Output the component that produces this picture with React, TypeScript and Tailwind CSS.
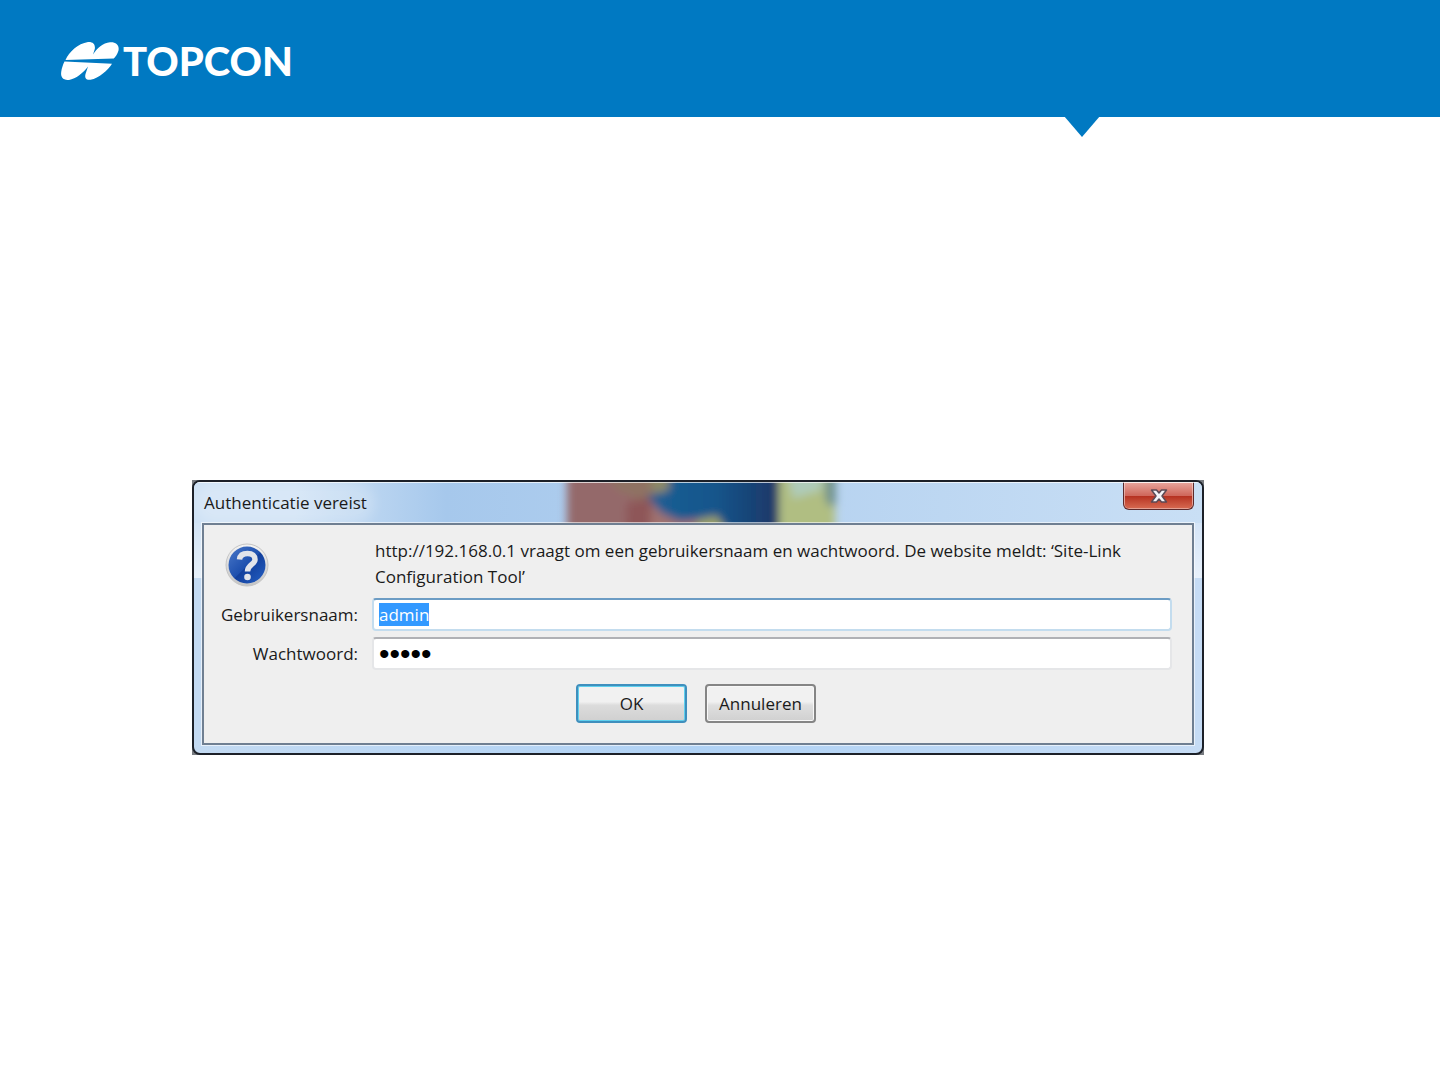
import { useEffect, useRef, useState } from 'react'

function Logo() {
  return (
    <a href="#" aria-label="Topcon" className="flex items-center gap-1 text-white">
      <svg width="59" height="40" viewBox="0 0 59 40" fill="currentColor" aria-hidden="true">
        <path d="M5.500 19C9 11 18 2.500 28 1C33 .6 35.500 3.500 34.800 8L33 13.500C37 7 43 1.800 50 1.200C56 .8 59.500 4 58.500 9.500C57.500 13 55.500 15.800 53.800 17.500Z" />
        <path d="M4.500 20.500L52 22.800C48 29 39 37.500 30.500 38.800C26 39.300 24.500 37 25.500 33L28 25.500C23 32 16 38 9 38.900C3 39.500 .5 36 1.200 31C1.800 27 3 23.500 4.500 20.500Z" />
      </svg>
      <span className="font-['Lato',sans-serif] text-[40px] leading-10 font-black">TOPCON</span>
    </a>
  )
}

// Window content that shines through the glass title bar
function GlassBackdrop() {
  return (
    <svg className="absolute top-0 left-[37%] h-full w-[274px] overflow-visible" viewBox="0 0 274 40" preserveAspectRatio="none" aria-hidden="true">
      <defs>
        <filter id="soft" x="-10%" y="-50%" width="120%" height="200%">
          <feGaussianBlur stdDeviation="4" />
        </filter>
        <linearGradient id="sea" x1="0" x2="1">
          <stop offset="0" stopColor="#1b5f94" />
          <stop offset="0.5" stopColor="#17568c" />
          <stop offset="1" stopColor="#1b3565" />
        </linearGradient>
      </defs>
      <g filter="url(#soft)">
        <path d="M0 -20H200V60H0Z" fill="#94696a" />
        <path d="M28 -20H105V12L75 18L50 8Z" fill="#8f7263" />
        <path d="M60 20L86 14L100 60H58Z" fill="#8e5658" />
        <path d="M82 60L85 20L112 34L150 36V60Z" fill="#a07270" />
        <path d="M84 -20H104V10L92 13L84 6Z" fill="#8c8a68" />
        <path d="M102 -20H214V60H165L150 35L112 38L94 30L80 14L102 8Z" fill="url(#sea)" />
        <path d="M132 36L150 33L168 60H122Z" fill="#9da267" />
        <path d="M212 -20H268V60H212Z" fill="#b0be82" />
        <path d="M218 -20H258L254 8L226 16Z" fill="#afccb9" />
        <path d="M258 -20H269V22L262 24L258 16Z" fill="#71938f" />
      </g>
    </svg>
  )
}

function QuestionIcon() {
  return (
    <svg width="44" height="44" viewBox="0 0 44 44" aria-hidden="true">
      <defs>
        <linearGradient id="ring" x1="0" y1="0" x2="0" y2="1">
          <stop offset="0" stopColor="#f4f4f4" />
          <stop offset="1" stopColor="#c4c4c4" />
        </linearGradient>
        <linearGradient id="ball" x1="0" y1="0" x2="1" y2="1">
          <stop offset="0" stopColor="#4a78c8" />
          <stop offset="0.5" stopColor="#1d4fae" />
          <stop offset="0.52" stopColor="#123f9c" />
          <stop offset="1" stopColor="#2560c4" />
        </linearGradient>
      </defs>
      <circle cx="22" cy="22" r="21" fill="url(#ring)" stroke="#c4c4c4" />
      <circle cx="22" cy="22" r="18.500" fill="url(#ball)" />
      <path d="M14.500 16.500C15 12 18.500 10.500 22.500 10.500C27.500 10.500 30 13 30 16.500C30 21.500 22.500 21.500 22.500 28.500" fill="none" stroke="#e2e4ea" strokeWidth="5.500" />
      <circle cx="22.500" cy="34" r="3.300" fill="#e2e4ea" />
    </svg>
  )
}

function CloseIcon() {
  return (
    <svg width="18" height="16" viewBox="0 0 18 16" aria-hidden="true">
      <path
        d="M1.500 2H6.500L9 5L11.500 2H16.500L12 8L16.500 14H11.500L9 11L6.500 14H1.500L6 8Z"
        fill="#f4f4f8"
        stroke="#5b4a55"
        strokeWidth="1.500"
        strokeLinejoin="round"
      />
    </svg>
  )
}

function AuthDialog() {
  const [user, setUser] = useState('admin')
  const [password, setPassword] = useState('admin')
  const userRef = useRef<HTMLInputElement>(null)

  useEffect(() => {
    userRef.current?.focus()
    userRef.current?.select()
  }, [])

  return (
    <div className="w-full max-w-[1012px] bg-[#777b80]">
      <section
        role="dialog"
        aria-labelledby="dialog-title"
        className="relative overflow-hidden rounded-lg border-2 border-[#1c2028] bg-linear-to-r from-[#c3daf2] via-[#b0d2f5] to-[#c6dcf5]"
      >
        <div className="absolute inset-x-0 top-0 h-24 bg-linear-to-b from-transparent to-white/60" />
        <header className="relative flex h-[41px] items-start justify-between overflow-hidden bg-linear-to-r from-[#cfe2f5] from-10% via-[#a6c8ec] via-25% to-[#c9dff5] pr-2 pl-[10px]">
          <GlassBackdrop />
          <h1 id="dialog-title" className="relative self-center rounded-full bg-white/20 text-[17px] leading-6 shadow-[0_0_12px_8px_rgba(255,255,255,0.2)]">
            Authenticatie vereist
          </h1>
          <button
            type="button"
            aria-label="Sluiten"
            className="relative flex h-7 w-[71px] items-center justify-center rounded-b-md border border-t-0 border-[#5c2a2c] bg-linear-to-b from-[#e8a79f] from-0% via-[#d0695e] via-48% to-[#d2604a] shadow-[inset_0_0_0_1px_rgba(255,255,255,0.4)]"
          >
            <span className="absolute inset-x-px top-1/2 bottom-px rounded-b bg-linear-to-b from-[#b52f20] to-[#d5664e]" />
            <span className="relative">
              <CloseIcon />
            </span>
          </button>
          <span className="absolute inset-x-0 top-0 h-px bg-white/70" />
        </header>

        <form
          onSubmit={(e) => e.preventDefault()}
          className="relative mx-2 mb-2 grid grid-cols-[138px_1fr] gap-x-[14px] border-2 border-[#6f7f92] bg-[#efefef] pt-[13px] pr-5 pb-5 pl-4 outline outline-white/60"
        >
          <div className="pt-[5px] pl-[5px]">
            <QuestionIcon />
          </div>
          <p className="pl-[3px] text-[17px] leading-[26px]">
            http://192.168.0.1 vraagt om een gebruikersnaam en wachtwoord. De website meldt: ‘Site-Link Configuration Tool’
          </p>

          <label htmlFor="user" className="mt-2 self-center text-right text-[17px] leading-6">
            Gebruikersnaam:
          </label>
          <input
            id="user"
            ref={userRef}
            value={user}
            onChange={(e) => setUser(e.target.value)}
            className="mt-2 h-[33px] w-full rounded-sm border-2 border-[#c3dcee] border-t-[#6c9cc4] bg-white px-[5px] text-[17px] outline-none selection:bg-[#3399ff] selection:text-white"
          />

          <label htmlFor="password" className="mt-[6px] self-center text-right text-[17px] leading-6">
            Wachtwoord:
          </label>
          <input
            id="password"
            type="password"
            value={password}
            onChange={(e) => setPassword(e.target.value)}
            className="mt-[6px] h-[33px] w-full rounded-sm border-2 border-[#e5e6e8] border-t-[#b0b1b5] bg-white px-[5px] font-['Liberation_Sans',sans-serif] text-3xl text-black outline-none"
          />

          <div className="col-span-2 mt-[14px] flex justify-center gap-[18px]">
            <button
              type="submit"
              className="h-[39px] w-[111px] rounded border-2 border-[#3f8fbd] bg-linear-to-b from-[#f1f1f1] from-45% via-[#dcdcdc] via-55% to-[#d0d0d0] text-[17px] shadow-[inset_0_0_0_1px_#5fd0ee]"
            >
              OK
            </button>
            <button
              type="button"
              className="h-[39px] w-[111px] rounded border-2 border-[#858585] bg-linear-to-b from-[#f1f1f1] from-45% via-[#dfdfdf] via-55% to-[#d0d0d0] text-[17px] shadow-[inset_0_0_0_1px_#f8f8f8]"
            >
              Annuleren
            </button>
          </div>
        </form>
      </section>
    </div>
  )
}

export default function App() {
  return (
    <div className="min-h-screen bg-white font-['Open_Sans','Noto_Sans',sans-serif] text-[#1a1a1a]">
      <header className="relative flex h-[117px] items-center bg-[#0079c2] px-[60px] pt-1">
        <Logo />
        <svg className="absolute top-full right-[340px] -mt-px" width="36" height="21" viewBox="0 0 36 21" aria-hidden="true">
          <path d="M0 0H36L18 21Z" fill="#0079c2" />
        </svg>
      </header>
      <main className="pt-[363px] pr-10 pb-20 pl-48">
        <AuthDialog />
      </main>
    </div>
  )
}
